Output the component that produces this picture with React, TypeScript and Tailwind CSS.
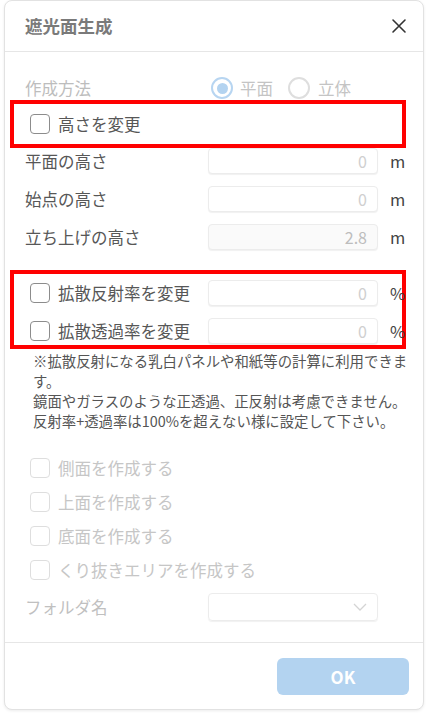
import React from "react";

const font = { fontFamily: '"Noto Sans CJK JP", "Noto Sans", sans-serif' };

function Checkbox({ disabled }: { disabled?: boolean }) {
  return (
    <span
      className={
        "inline-block w-[20px] h-[20px] rounded-[4px] border-[1.5px] bg-white shrink-0 " +
        (disabled ? "border-[#dedede]" : "border-[#8c8c8c]")
      }
    />
  );
}

function Field({ value, muted }: { value: string; muted?: boolean }) {
  return (
    <div
      className={
        "w-[170px] h-[26px] shrink-0 rounded-[4px] border border-[#ececec] shadow-[0_1px_1px_rgba(0,0,0,0.06)] flex items-center justify-end pr-[10px] text-[16px] " +
        (muted ? "bg-[#fafafa] text-[#bdbdbd]" : "bg-white text-[#cfcfcf]")
      }
    >
      {value}
    </div>
  );
}

function NumberRow({ label, value, muted }: { label: string; value: string; muted?: boolean }) {
  return (
    <div className="flex items-center h-[26px]">
      <span className="w-[183px] shrink-0 text-[16.5px] text-[#575757]">{label}</span>
      <Field value={value} muted={muted} />
      <span className="ml-[12px] text-[16.5px] text-[#444]">m</span>
    </div>
  );
}

function PercentRow({ label }: { label: string }) {
  return (
    <div className="flex items-center h-[26px] pl-[16px]">
      <div className="w-[178px] shrink-0 flex items-center gap-[8px]">
        <Checkbox />
        <span className="text-[16.5px] text-[#575757] whitespace-nowrap">{label}</span>
      </div>
      <Field value="0" />
      <span className="ml-[12px] shrink-0 text-[16.5px] text-[#444] whitespace-nowrap">%</span>
    </div>
  );
}

function DisabledCheck({ label }: { label: string }) {
  return (
    <div className="flex items-center h-[26px] pl-[5px] gap-[8px]">
      <Checkbox disabled />
      <span className="text-[16.5px] text-[#c6c6c6]">{label}</span>
    </div>
  );
}

export default function App() {
  return (
    <div className="w-[428px] h-[714px] bg-white overflow-hidden" style={font}>
      <div className="ml-[4px] w-[420px] h-[710px] border border-[#e2e2e2] rounded-[8px] bg-white flex flex-col shadow-[0_1px_3px_rgba(0,0,0,0.08)]">
        {/* Header */}
        <div className="h-[51px] shrink-0 border-b border-[#e6e6e6] flex items-center justify-between pl-[20px] pr-[16px]">
          <span className="text-[17.5px] font-bold text-[#7a7a7a]">遮光面生成</span>
          <svg width="16" height="16" viewBox="0 0 16 16" className="text-[#333]">
            <path d="M2 2L14 14M14 2L2 14" stroke="currentColor" strokeWidth="1.6" strokeLinecap="round" />
          </svg>
        </div>

        {/* Body */}
        <div className="flex-1 pt-[24px] pl-[20px]">
          <div className="flex items-center h-[24px]">
            <span className="w-[186px] shrink-0 text-[16.5px] text-[#bdbdbd]">作成方法</span>
            <div className="flex items-center">
              <span className="w-[22px] h-[22px] rounded-full border-2 border-[#b7d5f1] flex items-center justify-center">
                <span className="w-[11px] h-[11px] rounded-full bg-[#b3d3f0]" />
              </span>
              <span className="ml-[7px] text-[16.5px] text-[#c4c4c4]">平面</span>
              <span className="ml-[15px] w-[22px] h-[22px] rounded-full border-2 border-[#dedede]" />
              <span className="ml-[8px] text-[16.5px] text-[#c4c4c4]">立体</span>
            </div>
          </div>

          <div className="-ml-[15px] w-[396px] h-[48px] border-4 border-[#ff0000] flex items-center pl-[16px] gap-[8px]">
            <Checkbox />
            <span className="text-[16.5px] text-[#575757]">高さを変更</span>
          </div>

          <NumberRow label="平面の高さ" value="0" />
          <div className="mt-[12px]">
            <NumberRow label="始点の高さ" value="0" />
          </div>
          <div className="mt-[12px]">
            <NumberRow label="立ち上げの高さ" value="2.8" muted />
          </div>

          <div className="mt-[20px] -ml-[15px] w-[396px] h-[79px] border-4 border-[#ff0000] pt-[6px]">
            <PercentRow label="拡散反射率を変更" />
            <div className="mt-[12px]">
              <PercentRow label="拡散透過率を変更" />
            </div>
          </div>

          <p className="mt-[2px] pl-[8px] text-[14.4px] leading-[20px] text-[#555] whitespace-nowrap">
            ※拡散反射になる乳白パネルや和紙等の計算に利用できま
            <br />
            す。
            <br />
            鏡面やガラスのような正透過、正反射は考慮できません。
            <br />
            反射率+透過率は100%を超えない様に設定して下さい。
          </p>

          <div className="mt-[24px] flex flex-col gap-[8px]">
            <DisabledCheck label="側面を作成する" />
            <DisabledCheck label="上面を作成する" />
            <DisabledCheck label="底面を作成する" />
            <DisabledCheck label="くり抜きエリアを作成する" />
          </div>

          <div className="mt-[10px] flex items-center h-[28px]">
            <span className="w-[183px] shrink-0 text-[16.5px] text-[#c0c0c0]">フォルダ名</span>
            <div className="w-[170px] h-[28px] rounded-[4px] border border-[#ececec] shadow-[0_1px_1px_rgba(0,0,0,0.06)] flex items-center justify-end pr-[10px]">
              <svg width="14" height="8" viewBox="0 0 14 8">
                <path d="M1 1L7 7L13 1" fill="none" stroke="#d4d4d4" strokeWidth="1.3" />
              </svg>
            </div>
          </div>
        </div>

        {/* Footer */}
        <div className="h-[67px] shrink-0 border-t border-[#e6e6e6] flex items-start justify-end pt-[15px] pr-[14px]">
          <button className="w-[132px] h-[37px] rounded-[6px] bg-[#b3d3f0] text-white text-[17px] font-bold">
            OK
          </button>
        </div>
      </div>
    </div>
  );
}
